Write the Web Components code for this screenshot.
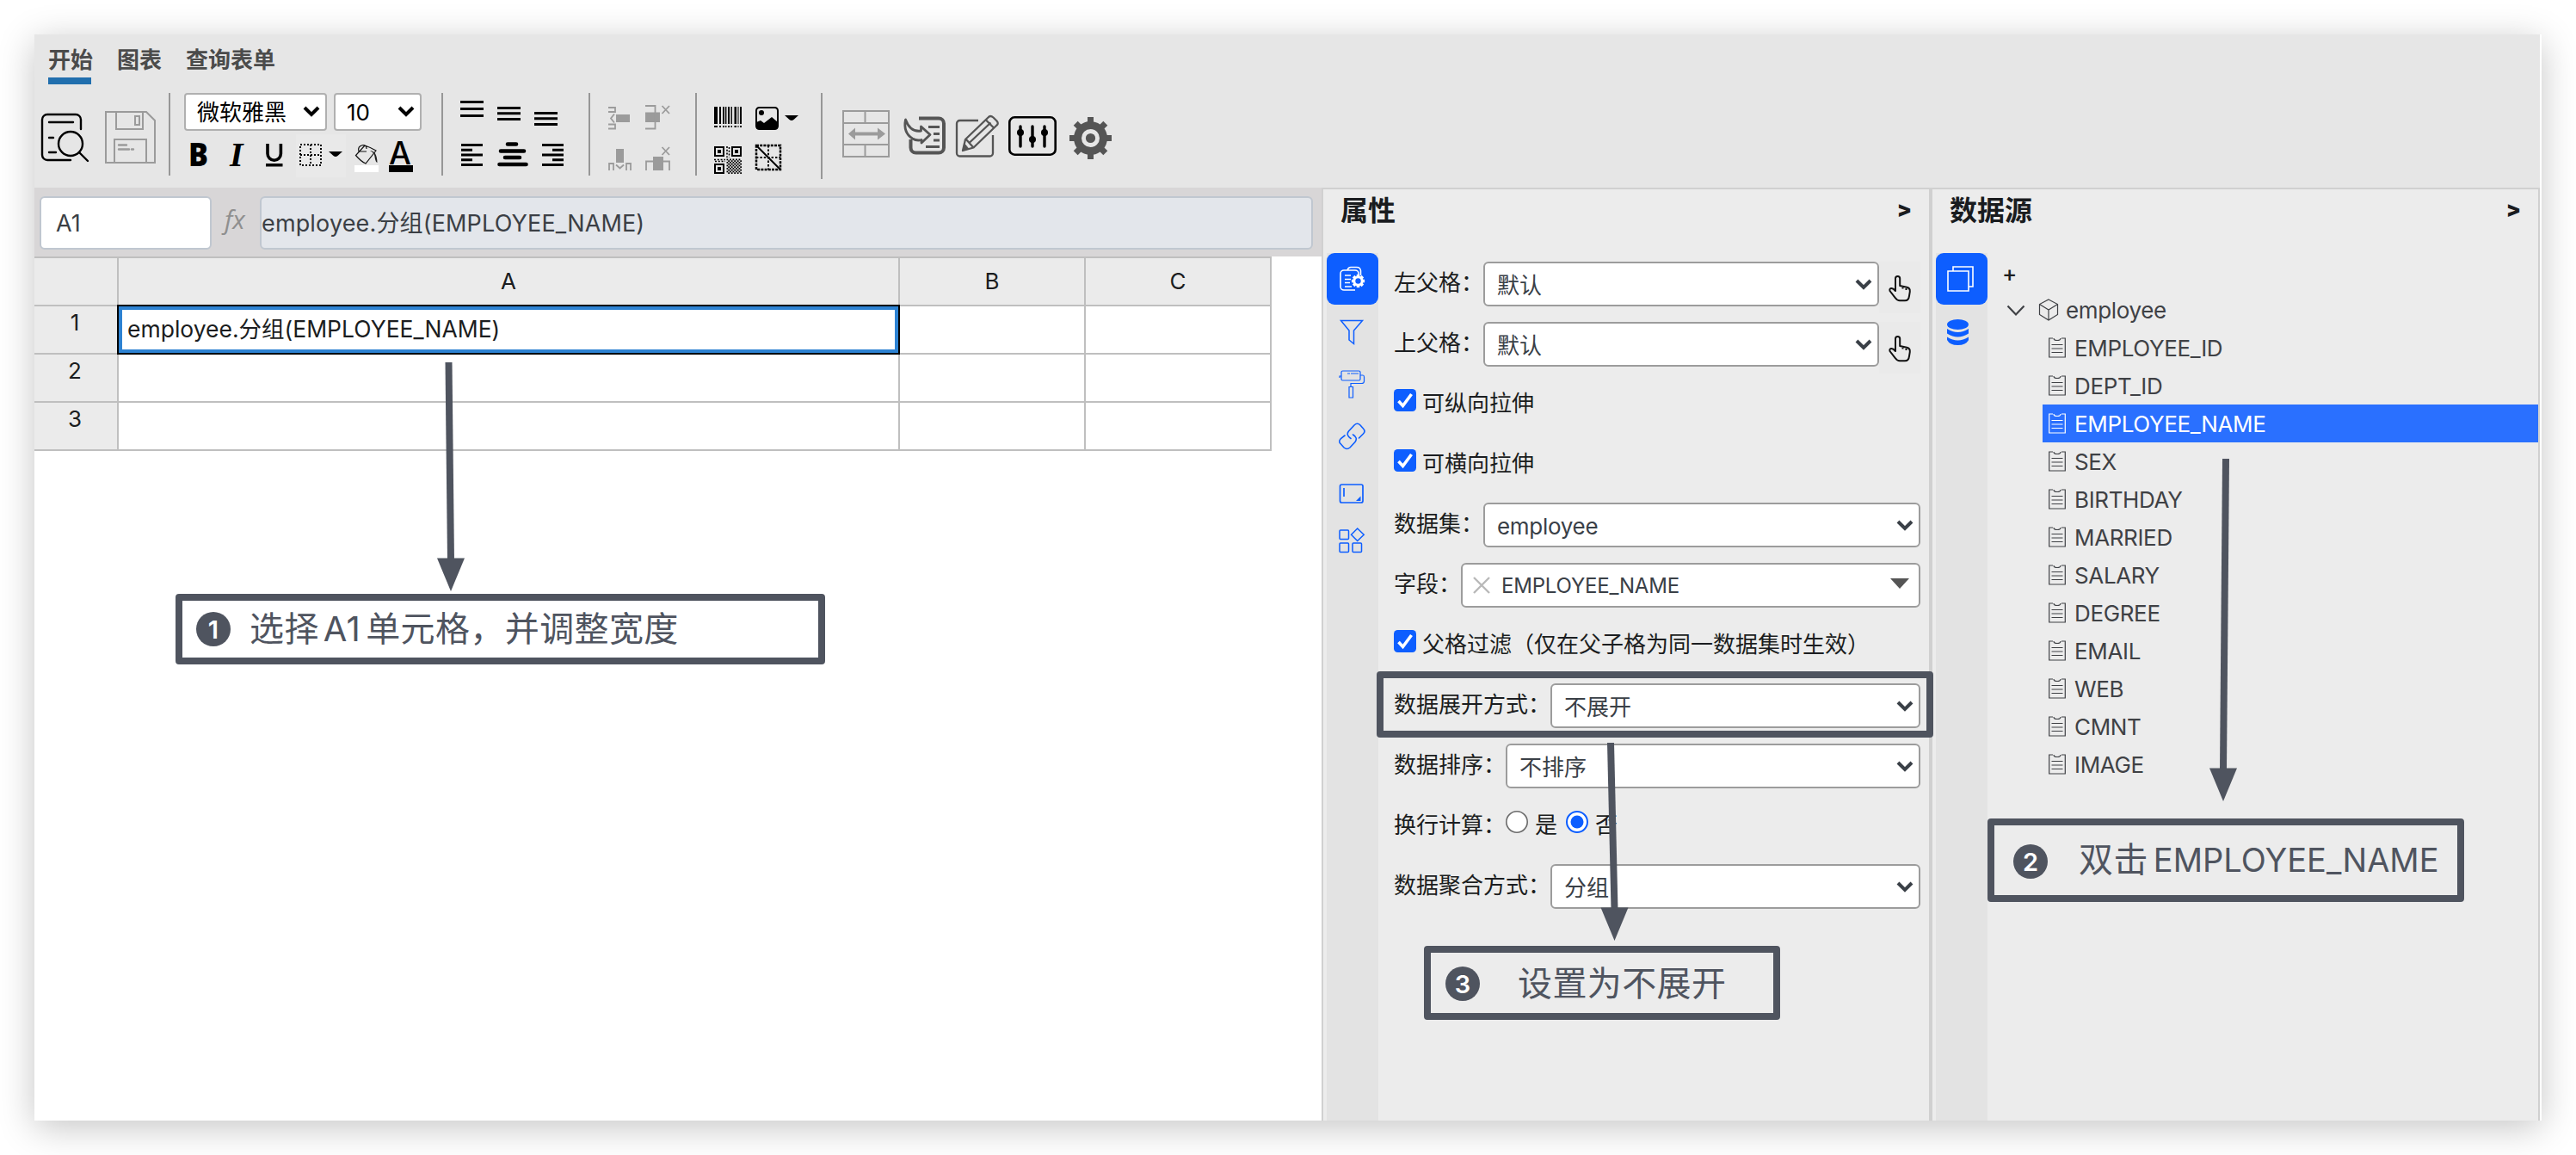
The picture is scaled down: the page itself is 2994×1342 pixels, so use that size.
<!DOCTYPE html>
<html lang="zh-CN">
<head>
<meta charset="utf-8">
<title>报表设计器</title>
<style>
  html, body { margin: 0; }
  body {
    width: 2994px;
    height: 1342px;
    overflow: hidden;
    background: #fff;
    font-family: Inter, "Noto Sans CJK SC", sans-serif;
    font-size: 26px;
    color: #1b1d20;
  }
</style>
</head>
<body>
<report-designer></report-designer>

<script>
// ---------------------------------------------------------------- icons

const range = (n) => [...Array(n).keys()];

const barcode = [[0, 4], [6, 2], [10, 2], [13, 1.4], [16, 2], [19.5, 1.4], [23.5, 2.5], [27.5, 1], [30, 2]]
  .map(([x, w]) => `<path d="M${x} 0h${w}v20h-${w}zM${x} 22h${w}v2h-${w}z"/>`).join("");

const qrNoise = range(10).map(r => range(10).map(c =>
  (r + c) % 2 ? "" : `<path d="M${14.5 + c * 1.75} ${14.5 + r * 1.75}h1.8v1.8h-1.8z"/>`).join("")).join("");

// name: [width, height, markup]
const ICONS = {
  preview: [57, 58, `<g fill="none" stroke="#000" stroke-width="2.4" stroke-linecap="round"><path d="M47 19V8a6 6 0 0 0-6-6H8a6 6 0 0 0-6 6v41a6 6 0 0 0 6 6h27M10 11h28M10 29h5M10 46h8"/><circle cx="35" cy="36" r="14"/><path d="M45 46l10 10"/></g>`],
  save: [59, 61, `<g fill="none" stroke="#9b9b9b" stroke-width="2"><path d="M1 1h47l10 10v49H1zM13 1v20h31V1M35 6h5v10h-5zM11 60V33h37v27"/><path d="M16 39.500h9M16 44.500h12M31 44.500h2" stroke-width="2.400" stroke-linecap="round"/></g>`],
  bold: [22, 32, `<text x="-2" y="27" font-family="Open Sans" font-weight="800" font-size="37.500" textLength="23" lengthAdjust="spacingAndGlyphs">B</text>`],
  italic: [22, 32, `<text x="1" y="27" font-family="Liberation Serif" font-style="italic" font-weight="700" font-size="40">I</text>`],
  underline: [22, 32, `<path d="M2 0v11.500a7.700 7.700 0 0 0 15.400 0V0" fill="none" stroke="#000" stroke-width="3.600"/><path d="M0 23h19.500v3.500H0z"/>`],
  borders: [26, 26, `<path d="M1 1h24v24H1zM13 1v24M1 13h24" fill="none" stroke="#000" stroke-width="2" stroke-dasharray="2 2"/>`],
  caret: [16, 6, `<path d="M0 0h16l-5.500 5q-2.500 2-5 0z"/>`],
  bucket: [28, 33, `<g fill="none" stroke="#111" stroke-width="1.200"><path d="M12 2L1.500 13.500Q8 21 13 23l12-15Q18 4 12 2zM5 9Q3 3 10 1.500q4 0 4 4.500M5 9h9"/></g><path d="M18 8q8 0 8.500 14q-2-1-2.500-4-.5-8-6-10z" fill="#222"/><path d="M0 25h28v8H0z" fill="#fff"/>`],
  fontcolor: [28, 36, `<text x="0" y="26" font-family="Inter" font-weight="500" font-size="36.500">A</text><path d="M0 27h28v8H0z"/>`],
  vtop: [28, 20, `<path d="M0 0h27v3H0zM0 8h27v3H0zM0 16h27v3H0z"/>`],
  vmid: [28, 20, `<path d="M0 0h27v3H0zM0 6.300h27v3H0zM0 13h27v3H0z"/>`],
  hleft: [26, 27, `<path d="M0 0h25v3H0zM0 5.800h13v3H0zM0 11.500h25v3H0zM0 17.300h13v3H0zM0 23h25v3H0z"/>`],
  hcenter: [36, 30, `<path d="M12 2.500h10M4 10.500h27M9 18h17M2.500 26h31" fill="none" stroke="#000" stroke-width="4.600" stroke-linecap="round"/>`],
  hright: [26, 27, `<path d="M0 0h25v3H0zM12 5.800h13v3H12zM0 11.500h25v3H0zM12 17.300h13v3H12zM0 23h25v3H0z"/>`],
  rowadd: [26, 28, `<path d="M9 10h16v9H9z" fill="#9b9b9b"/><path d="M0 2h8v5H0M0 21.500h8v5H0M7 9.500l-4 5 4 5" fill="none" stroke="#9b9b9b" stroke-width="1.800"/>`],
  rowdel: [30, 29, `<path d="M0 8.500h17V20H0z" fill="#9b9b9b"/><path d="M0 1h11.500v26.500H0M19.500 1l8.500 9M28 1l-8.500 9" fill="none" stroke="#9b9b9b" stroke-width="1.800"/>`],
  coladd: [27, 26, `<path d="M9 0h9v16H9z" fill="#9b9b9b"/><path d="M1 25v-8h5v8M21 25v-8h5v8M9 18.500l4.500 4 4.500-4" fill="none" stroke="#9b9b9b" stroke-width="1.800"/>`],
  coldel: [30, 29, `<path d="M9 12h12v16H9z" fill="#9b9b9b"/><path d="M1 28V17.500h27V28M19.500 1l8.500 9M28 1l-8.500 9" fill="none" stroke="#9b9b9b" stroke-width="1.800"/>`],
  barcode: [32, 24, barcode],
  image: [27, 27, `<rect x="1" y="1" width="25" height="25" rx="3.500" fill="none" stroke="#000" stroke-width="2"/><circle cx="7" cy="7" r="3"/><path d="M1 18l5-2 4 3 9-7 7 6v6q0 2-2 2H3q-2 0-2-2z"/>`],
  qrcode: [32, 32, `<g fill="none" stroke="#000" stroke-width="2"><path d="M1 1h10v10H1zM21 1h10v10H21zM1 21h10v10H1z"/></g><path d="M4 4h4v4H4zM24 4h4v4h-4zM4 24h4v4H4z"/><path d="M15 0v13M17.500 1v12M0 15.500h13M1 17.500h12" stroke="#000" stroke-width="1.600" stroke-dasharray="2 1.800"/>${qrNoise}`],
  diagonal: [31, 31, `<g fill="none" stroke="#000" stroke-width="2"><path d="M1 1h28v28H1z" stroke-width="2.500" stroke-dasharray="3 1.200"/><path d="M15 1v28M1 15h28" stroke-dasharray="2.400 2"/><path d="M1 1l28 28"/></g>`],
  merge: [55, 55, `<path d="M1 1h53v53H1zM2 15h51M2 40h51M26.500 1v13M26.500 41v13" fill="none" stroke="#9b9b9b" stroke-width="2"/><path d="M7 27.500l8-7v5h26v-5l9 7-9 7v-5H15v5z" fill="#9b9b9b"/>`],
  importer: [49, 45, `<g fill="none" stroke="#555"><path d="M18 2.500h23a6 6 0 0 1 6 6v28a6 6 0 0 1-6 6H14.500a6 6 0 0 1-6-6V27" stroke-width="4"/><path d="M29 12.500h13M35 20.500h7M35 28h7M26 35.500h16" stroke-width="3"/><path d="M2.500 4q-3 15 8 22 5 3 10.500 1.500V31l10-9.500L20.500 12v5Q8 19 2.500 4z" stroke-width="2.800" stroke-linejoin="round"/></g>`],
  edit: [51, 50, `<g fill="none" stroke="#555" stroke-width="2.300" stroke-linejoin="round"><path d="M26 7H4.500A3.500 3.500 0 0 0 1 10.500V45a3.500 3.500 0 0 0 3.500 3.500h35A3.500 3.500 0 0 0 43 45V24"/><path d="M8 42l3-13L37.500 3.500q2.500-3 6 0l4 4q2.500 3 0 5L20.500 38.500zM12 29l8 9M15.500 33L40.500 9.500M35 6.500l8.500 8.500"/><path d="M8 42l2-8 5 6z" fill="#555" stroke-width="1"/></g>`],
  sliders: [56, 46, `<rect x="1.300" y="1.300" width="53.400" height="43.400" rx="6" fill="none" stroke="#000" stroke-width="2.600"/><path d="M14 12v23M28 12v23M42 12v23" stroke="#000" stroke-width="3.400" stroke-linecap="round"/><circle cx="14" cy="19" r="4"/><circle cx="28" cy="27" r="4"/><circle cx="42" cy="19" r="4"/>`],
  gear: [50, 50, `<g transform="translate(24.500 24.500)" fill="#555">${range(8).map(i => `<path d="M-3.500-24.500h7V-15h-7z" transform="rotate(${i * 45})"/>`).join("")}<circle r="15" fill="none" stroke="#555" stroke-width="9"/><circle r="5.600"/></g>`],
  chevron: [20, 12, `<path d="M2 2l8 8 8-8" fill="none" stroke="currentColor" stroke-width="4"/>`],
  hand: [28, 32, `<path d="M9 19V4.500a2.600 2.600 0 0 1 5.200 0V13l8 1.800q4 1 3.600 5l-.8 5q-.6 5.500-5 5.500h-6q-3 0-5-3L2.500 19q-.8-3 2-3 2 0 4.500 3zM17.500 15v1.500M21.500 16v2" fill="none" stroke="#111" stroke-width="2" stroke-linejoin="round"/>`],
  cellprops: [30, 30, `<g fill="none" stroke="#fff" stroke-width="1.600"><path d="M22 12V8a4 4 0 0 0-4-4H5a4 4 0 0 0-4 4v15a4 4 0 0 0 4 4h13M9 4q1-3.500 4-3.500h7q4 0 4.500 4V10M6 10h7M6 14.500h7M6 18.500h6M6 23h8"/></g><g transform="translate(21.500 16.500)" fill="#fff">${range(8).map(i => `<path d="M-1.800-7.600h3.600V-4h-3.600z" transform="rotate(${i * 45})"/>`).join("")}<circle r="4.600" fill="none" stroke="#fff" stroke-width="2.800"/></g>`],
  filter: [30, 30, `<path d="M2.500 1.500h25L17.500 13v15.500L12 24V13z" fill="none" stroke="#0d5eff" stroke-width="1.500"/>`],
  roller: [30, 33, `<g fill="none" stroke="#0d5eff" stroke-width="1.200"><rect x="3" y="1" width="22" height="11" rx="1.500"/><path d="M3 7H1v2M25 6h3q1.500 0 1.500 2v5q0 2.500-3 2.500H14V19M12 19.500h4.500V32H12zM10 4h3M14 4h9"/></g>`],
  link: [31, 31, `<g fill="none" stroke="#0d5eff" stroke-width="1.600" stroke-linecap="round"><path d="M14 18.500q-6-4-2.500-8.500l6.500-7q3.500-3.500 7 0l3.500 4q3 3 0 6l-5 5"/><path d="M16.500 14q6 3.500 2.500 8.500l-6 6.500q-3.500 3-7 0l-3.500-4q-3.500-3 0-6.500L7 15"/></g>`],
  frame: [30, 23, `<rect x="1.500" y="1" width="26.500" height="21" rx="2" fill="none" stroke="#0d5eff" stroke-width="1.700"/><path d="M6 5v10" stroke="#0d5eff" stroke-width="1.700"/><path d="M25.500 14.500V20H20z" fill="#0d5eff"/>`],
  widgets: [30, 30, `<g fill="none" stroke="#0d5eff" stroke-width="1.500"><rect x="1" y="3" width="10.500" height="10.500" rx="1"/><rect x="1" y="18" width="10.500" height="10.500" rx="1"/><rect x="16" y="18" width="10.500" height="10.500" rx="1"/><path d="M21.700 1l7.500 7.300-7.500 7.200-7.200-7.200z"/></g>`],
  sheets: [32, 30, `<path d="M7 6V1h23v23h-5M1 6h24v23H1z" fill="none" stroke="#fff" stroke-width="1.600"/>`],
  database: [26, 30, `<g fill="#0d5eff"><ellipse cx="12.500" cy="6" rx="12.500" ry="6"/><path d="M0 11q12.500 8 25 0v5.500q-12.500 8-25 0zM0 20.500q12.500 8 25 0V24q-3 6-12.500 6T0 24z"/></g>`],
  expand: [22, 13, `<path d="M1.500 1.500L11 11.500l9.500-10" fill="none" stroke="#3f4145" stroke-width="2.200"/>`],
  cube: [24, 26, `<path d="M12 1l10.500 5.500v12L12 25 1.500 18.500v-12zM1.500 6.500L12 13l10.500-6.500M12 13v12" fill="none" stroke="#3f4145" stroke-width="1.200"/>`],
  column: [20, 24, `<path d="M5 1H.7v22h18.600V1H15M6 1q0 2.500 4 2.500T14 1M3.500 8.500h13M3.500 13h13M3.500 17.500h13" fill="none" stroke="currentColor" stroke-width="1.200"/>`],
  clear: [18, 18, `<path d="M0 0l18 18M18 0L0 18" fill="none" stroke="#b9b9b9" stroke-width="2.400"/>`],
  triangle: [22, 12, `<path d="M0 0h22L11 12z" fill="#555"/>`],
};

class UiIcon extends HTMLElement {
  constructor() {
    super();
    this.attachShadow({ mode: "open" });
  }
  connectedCallback() {
    const [w, h, body] = ICONS[this.getAttribute("name")];
    this.shadowRoot.innerHTML = `
      <style>
        :host { display: block; flex: none; width: ${w}px; height: ${h}px; }
        svg { display: block; overflow: visible; }
      </style>
      <svg width="${w}" height="${h}" viewBox="0 0 ${w} ${h}">${body}</svg>`;
  }
}
customElements.define("ui-icon", UiIcon);

// ---------------------------------------------------------------- base

class ViewElement extends HTMLElement {
  constructor() {
    super();
    this.attachShadow({ mode: "open" });
  }
  connectedCallback() {
    this.shadowRoot.innerHTML = `<style>${this.constructor.css}</style>${this.view()}`;
  }
}

// <pick-box>text</pick-box>: closed drop-down
customElements.define("pick-box", class extends ViewElement {
  static css = `
    :host {
      display: flex; align-items: center; justify-content: space-between;
      box-sizing: border-box; height: 52px; padding: 3px 6px 0 14px;
      border: 2px solid #9c9c9c; border-radius: 6px; background: #fff;
      color: #3a4047; line-height: 40px; white-space: nowrap;
    }
    ui-icon { margin-top: -4px; }
  `;
  view() { return `<slot></slot><ui-icon name="chevron"></ui-icon>`; }
});

// ---------------------------------------------------------------- toolbar

customElements.define("menu-tabs", class extends ViewElement {
  static css = `
    :host { display: flex; gap: 28px; height: 58px; padding: 0 16px; box-sizing: border-box; }
    span { position: relative; padding-top: 13px; font-weight: 700; line-height: 34px; color: #4b4b4b; }
    .on::after { content: ""; position: absolute; left: 0; top: 50px; width: 50px; height: 8px; background: #216fae; }
  `;
  view() { return `<span class="on">开始</span><span>图表</span><span>查询表单</span>`; }
});

customElements.define("tool-bar", class extends ViewElement {
  static css = `
    :host { display: flex; align-items: flex-start; height: 120px; }
    hr { flex: none; width: 2px; height: 96px; margin: 10px 0 0; border: 0; background: #979797; }
    .row { display: flex; align-items: flex-start; }
    pick-box {
      height: 44px; padding: 2px 6px 0 13px; border-color: #b0b0b0; border-radius: 4px; color: #000;
    }
    .split { display: flex; box-sizing: border-box; width: 58px; height: 50px; background: #e9e9e9; padding: 11px 4px; }
  `;
  view() {
    const i = (name, top, left) => `<ui-icon name="${name}" style="margin:${top}px 0 0 ${left}px"></ui-icon>`;
    return `
      ${i("preview", 33, 7)}${i("save", 31, 18)}
      <hr style="margin-left:15px">
      <div style="margin:10px 0 0 16px">
        <div class="row" style="gap:8px">
          <pick-box style="width:166px">微软雅黑</pick-box>
          <pick-box style="width:102px">10</pick-box>
        </div>
        <div class="row" style="margin-top:4px">
          ${i("bold", 10, 7)}${i("italic", 10, 23)}${i("underline", 11, 21)}
          <div class="split" style="margin-left:13px">${i("borders", 0, 0)}${i("caret", 9, 8)}</div>
          ${i("bucket", 11, 10)}${i("fontcolor", 9, 12)}
        </div>
      </div>
      <hr style="margin-left:23px">
      <div style="margin:19px 0 0 20px">
        <div class="row" style="height:48px">${i("vtop", 0, 0)}${i("vmid", 7, 15)}${i("vmid", 13, 15)}</div>
        <div class="row">${i("hleft", 2, 1)}${i("hcenter", 0, 16)}${i("hright", 2, 16)}</div>
      </div>
      <hr style="margin-left:28px">
      <div style="margin:24px 0 0 21px">
        <div class="row" style="height:48px">${i("rowadd", 1, 0)}${i("rowdel", 0, 17)}</div>
        <div class="row">${i("coladd", 3, 0)}${i("coldel", 0, 16)}</div>
      </div>
      <hr style="margin-left:28px">
      <div style="margin:26px 0 0 20px">
        <div class="row" style="height:44px">${i("barcode", 0, 0)}${i("image", 0, 16)}${i("caret", 10, 7)}</div>
        <div class="row">${i("qrcode", 2, 0)}${i("diagonal", 0, 16)}</div>
      </div>
      <hr style="margin-left:26px;height:100px">
      ${i("merge", 30, 23)}${i("importer", 37, 16)}${i("edit", 35, 12)}${i("sliders", 37, 10)}${i("gear", 38, 15)}`;
  }
});

// ---------------------------------------------------------------- sheet

customElements.define("formula-bar", class extends ViewElement {
  static css = `
    :host {
      display: flex; box-sizing: border-box; height: 80px; padding: 10px 10px 0 6px;
      background: #d8d6d7; font-size: 27px; color: #3b3f45;
    }
    div {
      box-sizing: border-box; height: 62px; border: 2px solid #c0c7d0; border-radius: 6px;
      line-height: 60px; white-space: nowrap;
    }
    .name { width: 200px; padding-left: 17px; background: #fff; }
    .fx { box-sizing: border-box; width: 56px; padding: 4px 0 0 15px; color: #8f8f8f; font: italic 400 30px/46px "Open Sans"; }
    .text { flex: 1; background: #e3e6eb; letter-spacing: .15px; }
  `;
  view() {
    return `<div class="name">A1</div><span class="fx">fx</span><div class="text">employee.分组(EMPLOYEE_NAME)</div>`;
  }
});

customElements.define("sheet-grid", class extends ViewElement {
  static css = `
    :host {
      display: grid; grid-template-columns: 98px 908px 216px 216px; grid-template-rows: 58px 56px 56px 56px;
      width: 1438px; color: #1b1d20; line-height: 36px; text-align: center;
    }
    div { box-sizing: border-box; border: solid #bfbfbf; border-width: 0 2px 2px 0; }
    .col { border-top-width: 2px; background: #ebebeb; line-height: 54px; }
    .num { background: #ebebeb; padding: 1px 2px 0 0; }
    .sel {
      margin: -2px 0 0 -2px; border: 2px solid #000; box-shadow: inset 0 0 0 4px #2d82d2;
      padding-left: 10px; text-align: left; font-size: 26.500px; line-height: 52px;
    }
  `;
  view() {
    const head = ["", "A", "B", "C"].map(t => `<div class="col">${t}</div>`).join("");
    const rows = [1, 2, 3].map(n => `<div class="num">${n}</div>` + ["A", "B", "C"].map(c =>
      n === 1 && c === "A" ? `<div class="sel">employee.分组(EMPLOYEE_NAME)</div>` : `<div></div>`).join("")).join("");
    return head + rows;
  }
});

// ---------------------------------------------------------------- side panels

// <side-panel heading icons="name:top:left,...">: title row, icon strip (first one active) and slotted body
customElements.define("side-panel", class extends ViewElement {
  static css = `
    :host {
      display: flex; flex-direction: column; box-sizing: border-box; background: #ececec;
      border: 2px solid #d0d0d0; border-bottom: 0;
    }
    header {
      display: flex; justify-content: space-between; box-sizing: border-box; height: 74px;
      padding: 0 20px 0 20px; font-weight: 700; font-size: 32px; line-height: 50px; color: #1a1c1f;
    }
    header b { font-size: 25px; line-height: 46px; }
    main { flex: 1; display: flex; padding-left: 4px; }
    nav { width: 60px; background: #e3e3e3; }
    nav div { display: flex; align-items: center; justify-content: center; height: 60px; }
    nav .on { border-radius: 9px; background: #0d5eff; }
    section { flex: 1; }
  `;
  view() {
    const tabs = this.getAttribute("icons").split(",").map((s, n) => {
      const [name, top = 0, left = 0] = s.split(":");
      return `<div${n ? "" : ' class="on"'}><ui-icon name="${name}" style="margin:${top}px 0 0 ${left}px"></ui-icon></div>`;
    }).join("");
    return `
      <header><span>${this.getAttribute("heading")}</span><b>&gt;</b></header>
      <main><nav>${tabs}</nav><section><slot></slot></section></main>`;
  }
});

customElements.define("prop-row", class extends ViewElement {
  static css = `
    :host { display: flex; align-items: flex-start; height: 70px; line-height: 50px; white-space: nowrap; }
    ::slotted(pick-box) { flex: 1; }
    ::slotted(pick-hand) { flex: none; }
  `;
  view() { return `<span>${this.getAttribute("label") || ""}</span><slot></slot>`; }
});

customElements.define("pick-hand", class extends ViewElement {
  static css = `:host { display: block; box-sizing: border-box; width: 48px; height: 60px; padding: 15px 0 0 10px; background: #eaeaea; }`;
  view() { return `<ui-icon name="hand"></ui-icon>`; }
});

customElements.define("field-box", class extends ViewElement {
  static css = `
    :host {
      flex: 1; display: flex; align-items: center; box-sizing: border-box; height: 52px; padding: 0 11px 0 13px;
      border: 2px solid #9c9c9c; border-radius: 6px; background: #fff; color: #3a4047; font-size: 24px;
    }
    span { flex: 1; margin-left: 14px; padding-top: 1px; letter-spacing: -.2px; }
    .tri { margin-top: -4px; }
  `;
  view() { return `<ui-icon name="clear"></ui-icon><span><slot></slot></span><ui-icon class="tri" name="triangle"></ui-icon>`; }
});

customElements.define("check-item", class extends ViewElement {
  static css = `
    :host { display: flex; height: 70px; line-height: 50px; white-space: nowrap; }
    svg { width: 26px; height: 26px; margin: 8px 7px 0 0; }
  `;
  view() {
    return `<svg viewBox="0 0 26 26"><rect width="26" height="26" rx="4.500" fill="#0d5eff"/><path d="M5.500 14l5 5.500L20.500 6" fill="none" stroke="#fff" stroke-width="3.600"/></svg><slot></slot>`;
  }
});

customElements.define("radio-item", class extends ViewElement {
  static css = `
    :host { display: flex; margin-right: 10px; }
    svg { width: 26px; height: 26px; margin: 8px 8px 0 0; }
  `;
  view() {
    return this.hasAttribute("checked")
      ? `<svg viewBox="0 0 26 26"><circle cx="13" cy="13" r="12" fill="#fff" stroke="#0d5eff" stroke-width="2"/><circle cx="13" cy="13" r="7.500" fill="#0d5eff"/></svg><slot></slot>`
      : `<svg viewBox="0 0 26 26"><circle cx="13" cy="13" r="12.200" fill="#fff" stroke="#6b6b6b" stroke-width="1.600"/></svg><slot></slot>`;
  }
});

customElements.define("prop-form", class extends ViewElement {
  static css = `
    :host { display: block; padding: 10px 10px 0 18px; }
    .latin { letter-spacing: -.3px; }
  `;
  view() {
    return `
      <prop-row label="左父格："><pick-box>默认</pick-box><pick-hand></pick-hand></prop-row>
      <prop-row label="上父格："><pick-box>默认</pick-box><pick-hand></pick-hand></prop-row>
      <check-item>可纵向拉伸</check-item>
      <check-item>可横向拉伸</check-item>
      <prop-row label="数据集："><pick-box class="latin">employee</pick-box></prop-row>
      <prop-row label="字段："><field-box>EMPLOYEE_NAME</field-box></prop-row>
      <check-item>父格过滤（仅在父子格为同一数据集时生效）</check-item>
      <prop-row label="数据展开方式："><pick-box>不展开</pick-box></prop-row>
      <prop-row label="数据排序："><pick-box>不排序</pick-box></prop-row>
      <prop-row label="换行计算："><radio-item>是</radio-item><radio-item checked>否</radio-item></prop-row>
      <prop-row label="数据聚合方式："><pick-box>分组</pick-box></prop-row>`;
  }
});

const FIELDS = ["EMPLOYEE_ID", "DEPT_ID", "EMPLOYEE_NAME", "SEX", "BIRTHDAY", "MARRIED",
  "SALARY", "DEGREE", "EMAIL", "WEB", "CMNT", "IMAGE"];

customElements.define("data-tree", class extends ViewElement {
  static css = `
    :host { display: block; padding-top: 6px; color: #3f4145; letter-spacing: -.35px; }
    .add { height: 38px; padding-left: 17px; font-size: 26px; line-height: 36px; color: #1b1d20; font-weight: 500; }
    .node { display: flex; align-items: center; height: 44px; }
    .root { padding-left: 22px; }
    .leaf { margin-left: 64px; padding-left: 7px; gap: 10px; }
    .on { background: #2a70ff; color: #fff; }
  `;
  view() {
    return `
      <div class="add">+</div>
      <div class="node root">
        <ui-icon name="expand"></ui-icon><ui-icon name="cube" style="margin:0 8px 0 15px"></ui-icon><span>employee</span>
      </div>
      ${FIELDS.map(f => `<div class="node leaf${f === "EMPLOYEE_NAME" ? " on" : ""}"><ui-icon name="column"></ui-icon><span>${f}</span></div>`).join("")}`;
  }
});

// ---------------------------------------------------------------- annotations

// <step-note n="1">: framed step with a numbered disc
customElements.define("step-note", class extends ViewElement {
  static css = `
    :host {
      position: absolute; display: flex; align-items: center; box-sizing: border-box;
      border: 8px solid #4f545f; border-radius: 4px; color: #4f545f;
      font-size: 40px; line-height: 60px; letter-spacing: .4px; white-space: nowrap;
    }
    i {
      flex: none; width: 40px; height: 40px; border-radius: 50%; background: #4f545f; color: #fff;
      font: 600 29px/41px Inter; letter-spacing: 0; text-align: center;
    }
  `;
  view() { return this.hasAttribute("n") ? `<i>${this.getAttribute("n")}</i><slot></slot>` : ""; }
});

customElements.define("step-arrows", class extends ViewElement {
  static css = `:host { position: absolute; left: 0; top: 0; } svg { display: block; }`;
  view() {
    const arrow = (x1, y1, x2, y2) => `<path d="M${x1} ${y1}L${x2} ${y2 - 36}" stroke="#4f545f" stroke-width="8"/><path d="M${x2 - 16} ${y2 - 38.500}h32L${x2} ${y2}z" fill="#4f545f"/>`;
    return `<svg width="2994" height="1342">${arrow(521.500, 421, 524, 687)}${arrow(2587, 533, 2584, 931)}${arrow(1872, 863, 1876.500, 1093)}</svg>`;
  }
});

customElements.define("report-designer", class extends ViewElement {
  static css = `
    :host { display: block; position: relative; box-sizing: border-box; width: 2994px; height: 1342px; padding: 40px; }
    .window {
      display: flex; flex-direction: column; box-sizing: border-box; height: 1262px;
      background: #e6e6e6; border-right: 2px solid #fff; box-shadow: 0 8px 40px rgba(0, 0, 0, .23);
    }
    .body { flex: 1; display: flex; }
    .sheet { width: 1496px; background: #fff; }
    .up { margin-top: -5px; }
  `;
  view() {
    return `
      <div class="window">
        <menu-tabs></menu-tabs>
        <tool-bar></tool-bar>
        <div class="body">
          <div class="sheet"><formula-bar></formula-bar><sheet-grid></sheet-grid></div>
          <side-panel heading="属性" icons="cellprops:2,filter:4:-2,roller:4:-2,link:4:-2,frame:18:-2,widgets:8:-2" style="width:708px"><prop-form></prop-form></side-panel>
          <side-panel heading="数据源" icons="sheets:0:-2,database:4:-8" style="flex:1"><data-tree></data-tree></side-panel>
        </div>
      </div>
      <step-note style="left:1600px;top:780px;width:647px;height:77px"></step-note>
      <step-note n="1" style="left:204px;top:690px;width:755px;height:82px;padding-left:16px"><span style="margin-left:22px">选择</span><span style="margin:0 6px 0 5px">A1</span><span>单元格，并调整宽度</span></step-note>
      <step-note n="2" style="left:2310px;top:951px;width:554px;height:97px;padding:3px 0 0 22px"><span class="up" style="margin-left:36px">双击</span><span class="up" style="margin-left:6px;font-size:38px;letter-spacing:0">EMPLOYEE_NAME</span></step-note>
      <step-note n="3" style="left:1655px;top:1099px;width:414px;height:86px;padding:2px 0 0 17px"><span style="margin-left:44px">设置为不展开</span></step-note>
      <step-arrows></step-arrows>`;
  }
});
</script>
</body>
</html>
